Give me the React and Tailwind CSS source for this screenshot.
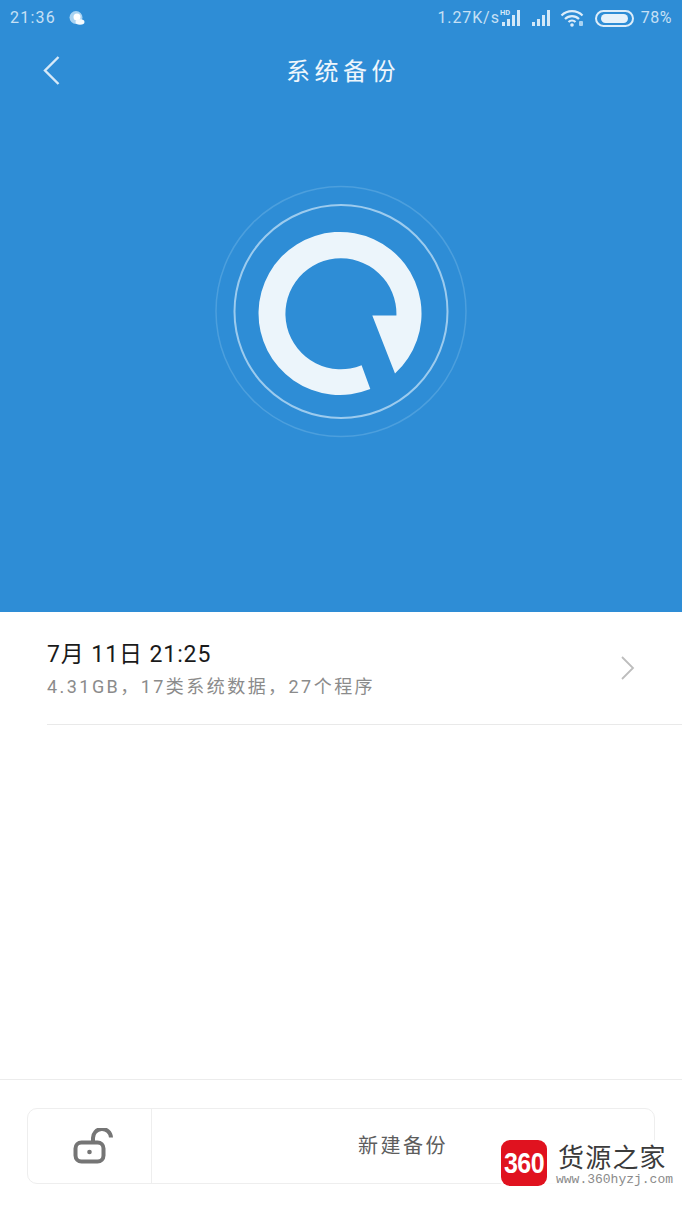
const sans = "font-['Roboto','Noto_Sans_CJK_SC',sans-serif]";

function Signal({ hd }) {
  return (
    <svg width="22" height="20" viewBox="0 0 22 20" className="block">
      {hd && (
        <text x="0" y="7" fontSize="7.5" fontWeight="700" fontFamily="Roboto, sans-serif" fill="#d3e8f8">
          HD
        </text>
      )}
      <rect x="2" y="14" width="3" height="4" fill="#d3e8f8" />
      <rect x="7" y="11" width="3" height="7" fill="#d3e8f8" />
      <rect x="12" y="7" width="3" height="11" fill="#d3e8f8" />
      <rect x="17" y="2" width="3" height="16" fill="#d3e8f8" />
    </svg>
  );
}

function StatusBar() {
  return (
    <div className={`flex items-center justify-between h-9 pl-[10px] pr-[10px] text-[16px] text-[#c6e0f5] ${sans}`}>
      <div className="flex items-center gap-[12px]">
        <span className="tracking-[1.2px]">21:36</span>
        <svg width="18" height="18" viewBox="0 0 18 18" className="block">
          <circle cx="8" cy="8.5" r="6.5" fill="#a9d3f2" />
          <circle cx="9" cy="8" r="3.5" fill="#ffffff" />
          <ellipse cx="12" cy="13" rx="4.5" ry="2.8" fill="#f4fafe" />
        </svg>
      </div>
      <div className="flex items-center">
        <span className="tracking-[0.9px]">1.27K/s</span>
        <Signal hd />
        <div className="w-[8px]" />
        <Signal />
        <svg width="26" height="20" viewBox="0 0 26 20" className="block ml-[8px]">
          <path d="M1.5 7.5a15 15 0 0 1 21 0" fill="none" stroke="#dcedfa" strokeWidth="2.2" />
          <path d="M5 11a10 10 0 0 1 14 0" fill="none" stroke="#dcedfa" strokeWidth="2.2" />
          <path d="M8.5 14a5 5 0 0 1 7 0" fill="none" stroke="#dcedfa" strokeWidth="2.2" />
          <circle cx="12" cy="17" r="1.8" fill="#dcedfa" />
          <rect x="19" y="13" width="4" height="5" rx="1" fill="#a9d3f2" />
        </svg>
        <div className="flex items-center justify-center w-[39px] h-[17px] ml-[9px] rounded-full border-2 border-[#dcedfa]">
          <div className="w-[27px] h-[9px] rounded-full bg-[#e6f2fb]" />
        </div>
        <span className="ml-[7px] tracking-[0.5px]">78%</span>
      </div>
    </div>
  );
}

function BackupLogo() {
  return (
    <svg width="260" height="260" viewBox="0 0 260 260" className="block">
      <circle cx="130" cy="128.5" r="125" fill="none" stroke="#4c9fdd" strokeWidth="1.5" />
      <circle cx="130" cy="128.5" r="106.5" fill="none" stroke="#9ccbee" strokeWidth="2" />
      <path
        d="M185.4 132.6H161.3L184 190.6A81.5 81.5 0 1 0 159.3 206.1L150.6 182.3A55.5 55.5 0 1 1 185.4 132.6Z"
        fill="#ecf5fb"
      />
    </svg>
  );
}

function Watermark() {
  return (
    <div className="absolute left-[501px] top-[1140px] flex items-start bg-white/80 pr-[8px]">
      <div className="flex items-center justify-center w-[46px] h-[46px] rounded-[9px] bg-[#e0121f] text-white text-[25px] font-bold font-['Liberation_Sans',sans-serif] tracking-[-0.5px]">
        <span className="scale-y-[1.2]">360</span>
      </div>
      <div className="ml-[11px] -mt-[1px]">
        <div className="text-[26px] leading-[33px] text-[#3b3b3b] tracking-[1.2px] font-['Noto_Sans_CJK_SC',sans-serif]">
          货源之家
        </div>
        <div className="-ml-[2px] text-[13px] leading-[15px] text-[#8a8a8a] font-['Liberation_Mono',monospace]">
          www.360hyzj.com
        </div>
      </div>
    </div>
  );
}

export default function App() {
  return (
    <div className={`relative flex flex-col w-[682px] h-[1212px] overflow-hidden bg-white ${sans}`}>
      <div className="h-[612px] bg-[#2e8dd6]">
        <StatusBar />
        <div className="relative flex items-center justify-center h-[70px]">
          <svg width="20" height="32" viewBox="0 0 20 32" className="absolute left-[42px] top-[19px]">
            <path d="M16.5 2 3 15.5 16.5 29" fill="none" stroke="#d6e9f8" strokeWidth="2.4" />
          </svg>
          <span className="ml-[4px] mt-[2px] text-[24px] text-[#eef6fc] tracking-[4.5px]">系统备份</span>
        </div>
        <div className="flex justify-center mt-[77px]">
          <BackupLogo />
        </div>
      </div>

      <div className="flex-1 pl-[47px]">
        <div className="flex items-center justify-between h-[113px] pr-[46px] border-b-[1.5px] border-[#e9e9e9]">
          <div className="pt-[7px]">
            <div className="text-[23px] leading-[28px] text-[#1a1a1a] tracking-[0.9px] mt-[-4px]">7月 11日 21:25</div>
            <div className="text-[18px] leading-[24px] text-[#8b8b8b] tracking-[2.45px] mt-[6px]">
              4.31GB，17类系统数据，27个程序
            </div>
          </div>
          <svg width="16" height="26" viewBox="0 0 16 26" className="block">
            <path d="M2 2l11 11L2 24" fill="none" stroke="#bdbdbd" strokeWidth="1.8" />
          </svg>
        </div>
      </div>

      <div className="h-[133px] border-t border-[#ececec] pt-[28px] px-[27px]">
        <div className="flex h-[76px] w-[628px] rounded-[10px] border-[1.5px] border-[#eeeeee]">
          <div className="flex items-center justify-center w-[124px] pl-[8px] border-r-[1.5px] border-[#eeeeee]">
            <svg width="42" height="36" viewBox="0 0 42 36" className="block">
              <rect x="2.5" y="14.5" width="28" height="19" rx="6" fill="none" stroke="#757575" strokeWidth="4" />
              <circle cx="16.5" cy="24" r="2.3" fill="#757575" />
              <path d="M20 13V10.5a9 9 0 0 1 18 -1" fill="none" stroke="#757575" strokeWidth="4" />
            </svg>
          </div>
          <div className="flex flex-1 items-center justify-center text-[20px] text-[#5d5d5d] tracking-[2.5px]">
            新建备份
          </div>
        </div>
      </div>

      <Watermark />
    </div>
  );
}
